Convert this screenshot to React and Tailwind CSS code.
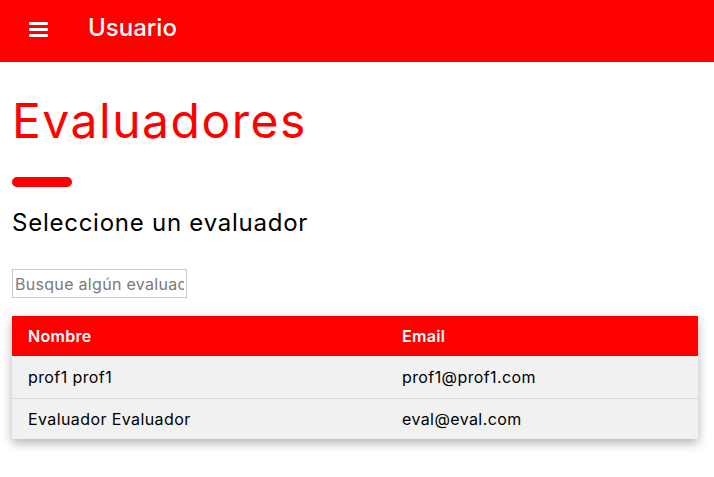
import React, { useState } from "react";

const evaluadores = [
  { id: 1, nombre: "prof1 prof1", email: "prof1@prof1.com" },
  { id: 2, nombre: "Evaluador Evaluador", email: "eval@eval.com" },
];

const App = () => {
  const [search, setSearch] = useState("");

  const filtered = evaluadores.filter((e) =>
    e.nombre.toLowerCase().includes(search.toLowerCase())
  );

  return (
    <div className="min-h-[477px] bg-white font-['Inter',sans-serif] text-black">
      <header className="h-[62px] bg-[#ff0000] flex items-center">
        <button className="ml-[29px] w-[19px] flex flex-col gap-[3px] mb-[4px]">
          <span className="block h-[3px] bg-white rounded-[1px]"></span>
          <span className="block h-[3px] bg-white rounded-[1px]"></span>
          <span className="block h-[3px] bg-white rounded-[1px]"></span>
        </button>
        <h1 className="ml-[40px] text-[24px] font-medium text-white mb-[6px]">
          Usuario
        </h1>
      </header>

      <main className="px-3">
        <h2 className="mt-[27px] text-[48px] leading-[64px] tracking-[1.5px] text-[#ff0000]">
          Evaluadores
        </h2>
        <div className="mt-[24px] w-[60px] h-[10px] rounded-full bg-[#ff0000]"></div>
        <h3 className="mt-[20px] text-[24px] leading-[32px] tracking-[0.75px]">
          Seleccione un evaluador
        </h3>
        <input
          type="text"
          placeholder="Busque algún evaluador"
          value={search}
          onChange={(e) => setSearch(e.target.value)}
          className="mt-[30px] block w-[175px] h-[29px] px-[2px] border border-[#c8c8c8] text-[16px] tracking-[0.3px] placeholder:text-[#7a7a7a] outline-none"
        />
        <table className="mt-[18px] w-[686px] table-fixed border-collapse shadow-[0_4px_10px_rgba(0,0,0,0.3)]">
          <thead>
            <tr className="bg-[#ff0000] text-white h-[40px]">
              <th className="w-[374px] px-4 text-left text-[16px] tracking-[0.3px] font-semibold">
                Nombre
              </th>
              <th className="px-4 text-left text-[16px] tracking-[0.3px] font-semibold">
                Email
              </th>
            </tr>
          </thead>
          <tbody>
            {filtered.map((e, i) => (
              <tr
                key={e.id}
                className={
                  i === 0
                    ? "bg-[#f1f1f1] h-[42px] border-b border-[#d8d8d8] text-[16px] tracking-[0.4px]"
                    : "bg-[#f1f1f1] h-[41px] text-[16px] tracking-[0.4px]"
                }
              >
                <td className="px-4">{e.nombre}</td>
                <td className="px-4">{e.email}</td>
              </tr>
            ))}
          </tbody>
        </table>
      </main>
    </div>
  );
};

export default App;
